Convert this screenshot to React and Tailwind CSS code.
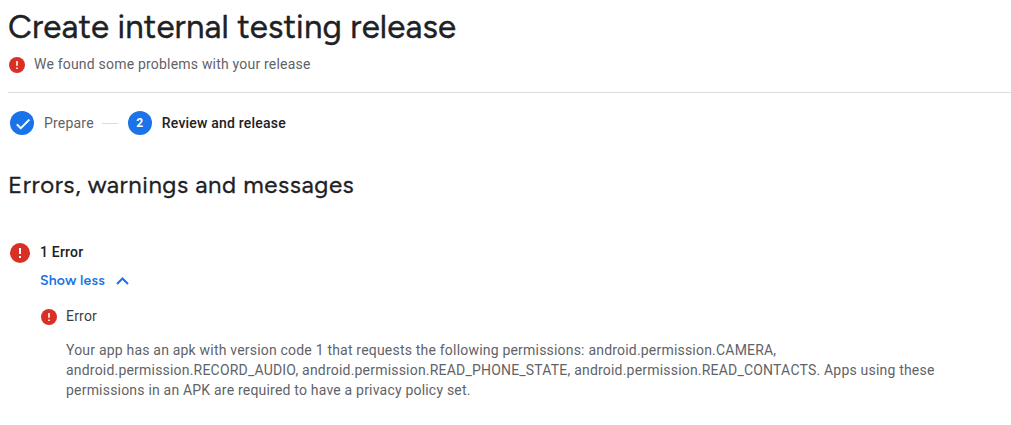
import React from "react";

function ErrorIcon({ className }) {
  return (
    <svg viewBox="0 0 20 20" className={className} aria-hidden="true">
      <circle cx="10" cy="10" r="10" fill="#d93025" />
      <path d="M9 5h2v6H9zM9 13h2v2H9z" fill="#fff" />
    </svg>
  );
}

export default function App() {
  return (
    <main className="h-[425px] w-[1011px] overflow-hidden bg-white pl-2 font-['Roboto',sans-serif] text-sm leading-5 tracking-[0.2px] text-[#5f6368]">
      <header className="h-[93px] border-b border-[#dadce0] pt-[5px]">
        <h1 className="h-[45px] font-['Figtree','Lato',sans-serif] text-[33px] leading-[44px] tracking-[0.16px] text-[#202124] [-webkit-text-stroke:0.4px_#202124]">
          <span className="whitespace-nowrap">Create internal testing release</span>
        </h1>
        <div className="flex items-center gap-[9px] pt-1 pl-px">
          <ErrorIcon className="mt-0.5 size-4" />
          <p className="whitespace-nowrap">We found some problems with your release</p>
        </div>
      </header>
      <nav className="flex h-[60px] items-center pl-0.5">
        <div className="grid size-6 place-items-center rounded-full bg-[#1a73e8]">
          <svg viewBox="0 0 24 24" className="mt-0.5 ml-0.5 size-[18px]" fill="#fff" stroke="#fff" strokeWidth="0.9"><path d="M9 16.2 4.8 12l-1.4 1.4L9 19 21 7l-1.4-1.4z" /></svg>
        </div>
        <span className="ml-2.5">Prepare</span>
        <span className="mr-2.5 ml-2 h-px w-4 bg-[#dadce0]" />
        <div className="grid size-6 place-items-center rounded-full bg-[#1a73e8] text-xs font-bold tracking-normal text-white">2</div>
        <span className="ml-2.5 font-medium text-[#202124]">Review and release</span>
      </nav>
      <h2 className="mt-4 h-8 whitespace-nowrap font-['Figtree','Lato',sans-serif] text-2xl leading-8 tracking-[0.58px] text-[#202124] [-webkit-text-stroke:0.3px_#202124]">Errors, warnings and messages</h2>
      <section className="mt-[41px]">
        <div className="flex items-center gap-2.5 pl-0.5">
          <ErrorIcon className="relative top-px size-5" />
          <h3 className="font-medium text-[#202124]">1 Error</h3>
        </div>
        <button className="mt-2 ml-8 flex h-5 items-center gap-3 font-['Figtree','Lato',sans-serif] font-semibold tracking-[0.2px] text-[#1a73e8]">
          <span className="pt-0.5">Show less</span>
          <svg viewBox="0 0 13 8" className="mt-0.5 -ml-px h-2 w-[13px]" fill="none" stroke="currentColor" strokeWidth="2"><path d="m1 7 5.5-5.5L12 7" /></svg>
        </button>
        <div className="mt-4 flex items-center gap-[9px] pl-[33px]">
          <ErrorIcon className="mt-0.5 size-4" />
          <span className="text-[#3c4043]">Error</span>
        </div>
        <p className="mt-3.5 ml-[58px] whitespace-nowrap">
          Your app has an apk with version code 1 that requests the following permissions: android.permission.CAMERA,<br />
          android.permission.RECORD_AUDIO, android.permission.READ_PHONE_STATE, android.permission.READ_CONTACTS. Apps using these<br />
          permissions in an APK are required to have a privacy policy set.
        </p>
      </section>
    </main>
  );
}
